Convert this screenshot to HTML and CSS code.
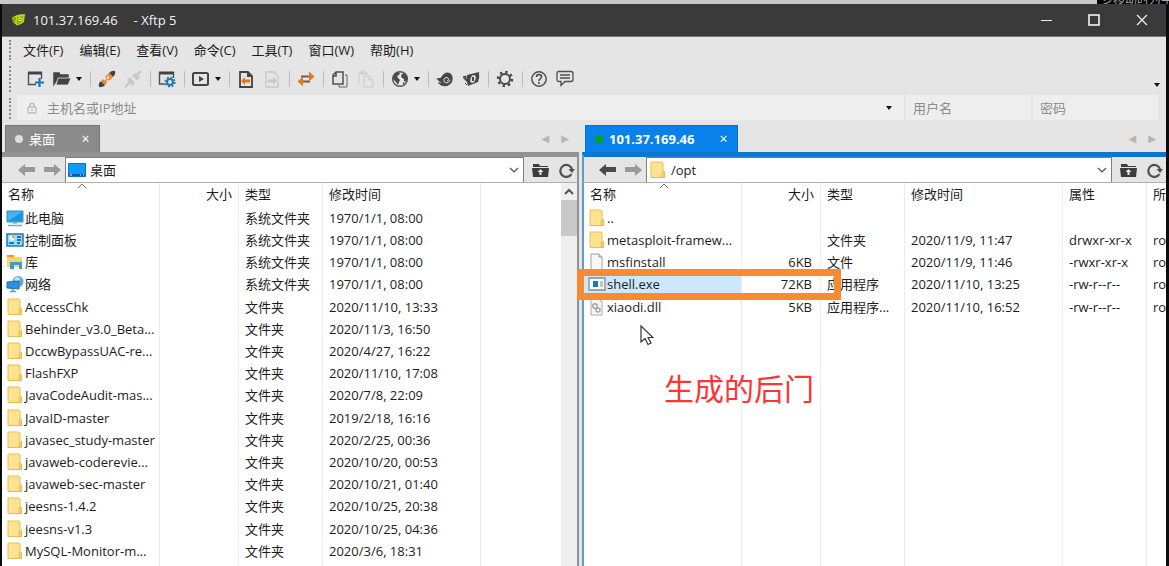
FILE: index.html
```html
<!DOCTYPE html>
<html lang="zh-CN">
<head>
<meta charset="utf-8">
<title>101.37.169.46 - Xftp 5</title>
<link rel="stylesheet" href="styles.css">
</head>
<body>
<svg class="defs" aria-hidden="true">
  <symbol id="folder" viewBox="0 0 16 18"><path d="M1 1h11v1h1v9h1.500v5.500H1z" fill="#ffe391" stroke="#e9bd52"/><path d="M12 16.500v-5l2.500-1v6z" fill="#f8cf68" stroke="#e5b74c" stroke-width=".7"/></symbol>
  <symbol id="back" viewBox="0 0 18 14"><path d="M0 7l7-6v3h10v5H7v4z" fill="currentColor"/></symbol>
  <symbol id="fwd" viewBox="0 0 18 14"><path d="M17 7l-7-6v3H0v5h10v4z" fill="currentColor"/></symbol>
  <symbol id="up" viewBox="0 0 18 14"><path d="M1 3V1h6l1 2h8v1H1z" fill="#3c3c3c"/><path d="M0 5h17l-1 9H1z" fill="#3c3c3c"/><path d="M8.500 6l3 3h-2v3h-2V9h-2z" fill="#e5e5e5"/></symbol>
  <symbol id="reload" viewBox="0 0 18 16"><path d="M13.500 12A6 6 0 1 1 14 7" fill="none" stroke="#505050" stroke-width="2.200"/><path d="M10.500 7H17l-3 4z" fill="#505050"/></symbol>
  <symbol id="chev" viewBox="0 0 10 6"><path d="M1 1l4 4 4-4" fill="none" stroke="#505050" stroke-width="1.200"/></symbol>
  <symbol id="drop" viewBox="0 0 6 4"><path d="M0 0h6L3 4z" fill="#111"/></symbol>
  <symbol id="doc" viewBox="0 0 16 18"><path d="M2 1h8l3 3v13H2z" fill="#f8f8f8" stroke="#8c8c8c" stroke-width=".8"/><path d="M10 1v3h3" fill="#ddd" stroke="#8c8c8c" stroke-width=".8"/></symbol>
</svg>
<div class="backdrop"><span>彡移动时为手</span></div>
<main class="window">
  <header class="titlebar">
    <svg width="14" height="14" viewBox="0 0 14 14"><path d="M0 4.500L3 3Q6 1 13 1l-1 8q-3 3-7 3.500L2 10 1 8z" fill="#b0d81c"/><path d="M0 5l4-1-1 7-2-2z" fill="#7fa80c"/><path d="M5 4.500l6-1.500-1 6-5 2z" fill="#7fa80c"/><circle cx="8" cy="6.500" r="2" fill="#e4ee3f"/><circle cx="8" cy="6.500" r=".8" fill="#56780c"/></svg>
    <h1>101.37.169.46</h1><span class="app">- Xftp 5</span>
    <div class="winbtns">
      <button aria-label="最小化"><svg width="12" height="12"><path d="M1 6.500h11" stroke="#eee"/></svg></button>
      <button aria-label="最大化"><svg width="12" height="12"><path d="M1 1h10v10H1z" fill="none" stroke="#fff" stroke-width="1.500"/></svg></button>
      <button aria-label="关闭"><svg width="12" height="12"><path d="M1 1l10 10M11 1L1 11" stroke="#eee" stroke-width="1.300"/></svg></button>
    </div>
  </header>
  <nav class="menu grip"><button>文件(F)</button><button>编辑(E)</button><button>查看(V)</button><button>命令(C)</button><button>工具(T)</button><button>窗口(W)</button><button>帮助(H)</button></nav>
  <div class="toolbar grip">
    <button aria-label="新建"><svg width="18" height="18" viewBox="0 0 18 18"><path d="M9 14.500H1.500V3h13v6" fill="none" stroke="#505050" stroke-width="1.400"/><path d="M1 3h14" stroke="#444" stroke-width="3"/><path d="M12.500 8v9M8 12.500h9" stroke="#1c78b4" stroke-width="2.200"/></svg></button>
    <button aria-label="打开" class="wide"><svg width="18" height="18" viewBox="0 0 18 18"><path d="M1 14V3h5l1 2h8v3H5z" fill="#444" stroke="#444" stroke-width="1.500"/><path d="M3 15L5 8h13l-3 7z" fill="#444" stroke="#e5e5e5" stroke-width=".8"/></svg><svg width="6" height="4"><use href="#drop"/></svg></button>
    <i></i>
    <button aria-label="连接"><svg width="18" height="18" viewBox="0 0 18 18"><path d="M1 17q-1-4 2-6l4 4q-1 2-6 2zM11 3q3-3 6-2 1 3-2 6z" fill="#444"/><path d="M4 10l4 4M10 4l4 4" stroke="#ed862b" stroke-width="2.600"/><path d="M7 12l2-3M8 8l1-3M10 10l3-2" stroke="#ed862b" stroke-width="1.600"/></svg></button>
    <button aria-label="断开" disabled><svg width="18" height="18" viewBox="0 0 18 18"><path d="M1 17l4-4M13 5l4-4" stroke="#c4c4c4" stroke-width="2"/><path d="M3 10l5 6 3-3-5-6zM8 5l5 6 3-4-4-4z" fill="#c9c9c9"/></svg></button>
    <i></i>
    <button aria-label="属性"><svg width="18" height="18" viewBox="0 0 18 18"><path d="M7 14H1.500V3h14v5" fill="none" stroke="#505050" stroke-width="1.400"/><path d="M1 3h15" stroke="#444" stroke-width="3"/><circle cx="12" cy="12" r="3" fill="none" stroke="#1c78b4" stroke-width="2"/><circle cx="12" cy="12" r="4.800" fill="none" stroke="#1c78b4" stroke-width="1.600" stroke-dasharray="1.900 1.870"/></svg></button>
    <i></i>
    <button aria-label="执行" class="wide"><svg width="18" height="18" viewBox="0 0 18 18"><rect x="1" y="3" width="15" height="12" rx="1.500" fill="none" stroke="#444" stroke-width="2"/><path d="M7 6l5 3-5 3z" fill="#444"/></svg><svg width="6" height="4"><use href="#drop"/></svg></button>
    <i></i>
    <button aria-label="向左传输"><svg width="18" height="18" viewBox="0 0 18 18"><path d="M3 2h8l4 4v11H3z" fill="none" stroke="#444" stroke-width="1.800"/><path d="M10 2v5h5" fill="#444"/><path d="M4 11l4-4v2.500h5v3H8V15z" fill="#df7624"/></svg></button>
    <button aria-label="向右传输" disabled><svg width="18" height="18" viewBox="0 0 18 18"><path d="M3 2h8l4 4v11H3z" fill="none" stroke="#c6c6c6" stroke-width="1.300"/><path d="M14 11l-4-4v2.500H5v3h5V15z" fill="#c6c6c6"/></svg></button>
    <i></i>
    <button aria-label="同步"><svg width="18" height="18" viewBox="0 0 18 18"><path d="M4 6.500h9M5 11.500h8" stroke="#606060" stroke-width="2"/><path d="M12 1.500l5.500 5-5.500 5zM6 6.500l-5.500 5 5.500 5z" fill="#e87a1c"/></svg></button>
    <i></i>
    <button aria-label="复制"><svg width="18" height="18" viewBox="0 0 18 18"><path d="M5 2h7v12H2V5zM5 2v4H2" fill="none" stroke="#505050" stroke-width="1.500"/><path d="M14 5h2v12H8v-2" fill="none" stroke="#666"/></svg></button>
    <button aria-label="粘贴" disabled><svg width="18" height="18" viewBox="0 0 18 18"><path d="M2 14V3h8v2M4 1h4v3H4zM7 6h5l4 4v7H7zM12 6v4h4" fill="none" stroke="#c9c9c9"/></svg></button>
    <i></i>
    <button aria-label="网络" class="wide"><svg width="18" height="18" viewBox="0 0 18 18"><circle cx="9" cy="9" r="7.300" fill="none" stroke="#555" stroke-width="1.500"/><path d="M2 6l4-4 3 1-1 2-2 1 1 2 2 2-1 2-1 3-2-3-3-3zM11 4l3-1 3 5-2 4-2-1v-2l-2-1-1-2zM12 12l2 1-2 2z" fill="#4a4a4a"/></svg><svg width="6" height="4"><use href="#drop"/></svg></button>
    <i></i>
    <button aria-label="Xshell"><svg width="18" height="18" viewBox="0 0 18 18"><path d="M0 8q5 1 6-2 3-5 8-3 4 3 2 9-3 5-9 4-4-1-5-4l4 1Q2 11 0 8z" fill="#484848"/><path d="M14 10q-1 3-4 3-3-1-2-4 2-3 4-1 2 2-1 3" fill="none" stroke="#ddd"/></svg></button>
    <button aria-label="Xftp"><svg width="18" height="18" viewBox="0 0 18 18"><path d="M5 5l12-3q1 5-1 10l-10 4-1-4-4-4 4 1z" fill="#484848"/><path d="M1 7l3-1v3zM5 15l-2-2" fill="#484848" stroke="#484848"/><ellipse cx="11" cy="9" rx="2.500" ry="4" fill="#ddd" transform="rotate(20 11 9)"/><path d="M11 7v4" stroke="#484848" stroke-width="2"/></svg></button>
    <i></i>
    <button aria-label="选项"><svg width="18" height="18" viewBox="0 0 18 18"><circle cx="9" cy="9" r="5" fill="none" stroke="#484848" stroke-width="2"/><circle cx="9" cy="9" r="7" fill="none" stroke="#484848" stroke-width="2.400" stroke-dasharray="2.400 3.098"/></svg></button>
    <i></i>
    <button aria-label="帮助"><svg width="18" height="18" viewBox="0 0 18 18"><circle cx="9" cy="9" r="7.200" fill="none" stroke="#505050" stroke-width="1.500"/><path d="M6.500 7q0-2.500 2.500-2.500T11.500 7Q11.500 8 9 10v1M9 12v2" fill="none" stroke="#444" stroke-width="1.500"/></svg></button>
    <button aria-label="反馈"><svg width="18" height="18" viewBox="0 0 18 18"><path d="M3 1.500h12q2 0 2 2v6q0 2-2 2H9l-4 4v-4H3q-2 0-2-2v-6q0-2 2-2zM4 5h10M4 8h10" fill="none" stroke="#505050" stroke-width="1.300"/></svg></button>
    <button class="more" aria-label="更多"><svg width="6" height="4"><use href="#drop"/></svg></button>
  </div>
  <form class="login grip">
    <label class="host"><svg width="10" height="12" viewBox="0 0 10 12"><path d="M1 5h8v6H1zM3 5V3q0-2 2-2t2 2v2M5 7v2" fill="none" stroke="#aaa"/></svg><input aria-label="主机" placeholder="主机名或IP地址"><svg width="6" height="4"><use href="#drop"/></svg></label>
    <input class="cred" aria-label="用户名" placeholder="用户名">
    <input class="cred" type="password" aria-label="密码" placeholder="密码">
  </form>
  <div class="panes">
    <section class="pane local">
      <div class="tabs"><div class="tab"><b class="dot"></b><span>桌面</span><button aria-label="关闭标签">×</button></div><div class="arrows"><span>◀</span><span>▶</span></div></div>
      <div class="path">
        <button class="off" aria-label="后退"><svg width="18" height="14"><use href="#back"/></svg></button><button class="off" aria-label="前进"><svg width="18" height="14"><use href="#fwd"/></svg></button>
        <label class="crumb"><svg width="18" height="14" viewBox="0 0 18 14"><path d="M.5.500h17v13H.5z" fill="#129aff" stroke="#0873c4"/><path d="M1 12h16" stroke="#075a9e" stroke-width="2"/><path d="M2 12h2M12 12h1M15 12h1" stroke="#fff"/></svg><input aria-label="本地路径" value="桌面"><svg width="10" height="6"><use href="#chev"/></svg></label>
        <button aria-label="上级目录"><svg width="18" height="14"><use href="#up"/></svg></button><button aria-label="刷新"><svg width="18" height="16"><use href="#reload"/></svg></button>
      </div>
      <div class="list">
        <table>
          <colgroup><col class="c-name"><col class="c-size"><col class="c-type"><col class="c-date"><col></colgroup>
          <thead><tr><th>名称<svg class="sort" width="10" height="6"><path d="M1 5l4-4 4 4" fill="none" stroke="#777"/></svg></th><th class="num">大小</th><th>类型</th><th>修改时间</th><th></th></tr></thead>
          <tbody>
            <tr><td><svg width="18" height="18" viewBox="0 0 18 18"><path d="M1 2h16v11H1z" fill="#42b4f4" stroke="#3388b8"/><path d="M2 12L16 3v9z" fill="#1b93e4"/><path d="M2 16.500h14M7 14h4" stroke="#8aa" stroke-width="1.500"/></svg>此电脑</td><td></td><td>系统文件夹</td><td>1970/1/1, 08:00</td><td></td></tr>
            <tr><td><svg width="18" height="18" viewBox="0 0 18 18"><path d="M1 3h16v12H1z" fill="#9bdcfa" stroke="#2574b0" stroke-width="1.500"/><circle cx="6" cy="7" r="2.500" fill="#fff"/><path d="M6 7V4.500A2.500 2.500 0 0 1 8.500 7z" fill="#e79b26"/><path d="M11 6h4M11 9h4M3 12h5M11 12h3" stroke="#1878b8" stroke-width="2"/></svg>控制面板</td><td></td><td>系统文件夹</td><td>1970/1/1, 08:00</td><td></td></tr>
            <tr><td><svg width="18" height="18" viewBox="0 0 18 18"><path d="M1 2h7l1 2h7v10H1z" fill="#fcd462"/><path d="M1 2h7v2H1z" fill="#e89b1c"/><path d="M4 16V9h12v7h-3v-4H8v4z" fill="#3f99d4"/></svg>库</td><td></td><td>系统文件夹</td><td>1970/1/1, 08:00</td><td></td></tr>
            <tr><td><svg width="18" height="18" viewBox="0 0 18 18"><circle cx="12" cy="6.500" r="5.500" fill="#62abd6"/><path d="M8 4q4-4 6 0l-2 5" fill="#bfe3f2"/><path d="M1 7l12-1v8L1 13z" fill="#2a93e0" stroke="#226fa7"/><path d="M4 16.500h6M7 14v2" stroke="#7899aa" stroke-width="1.500"/></svg>网络</td><td></td><td>系统文件夹</td><td>1970/1/1, 08:00</td><td></td></tr>
            <tr><td><svg width="18" height="18"><use href="#folder"/></svg>AccessChk</td><td></td><td>文件夹</td><td>2020/11/10, 13:33</td><td></td></tr>
            <tr><td><svg width="18" height="18"><use href="#folder"/></svg>Behinder_v3.0_Beta...</td><td></td><td>文件夹</td><td>2020/11/3, 16:50</td><td></td></tr>
            <tr><td><svg width="18" height="18"><use href="#folder"/></svg>DccwBypassUAC-re...</td><td></td><td>文件夹</td><td>2020/4/27, 16:22</td><td></td></tr>
            <tr><td><svg width="18" height="18"><use href="#folder"/></svg>FlashFXP</td><td></td><td>文件夹</td><td>2020/11/10, 17:08</td><td></td></tr>
            <tr><td><svg width="18" height="18"><use href="#folder"/></svg>JavaCodeAudit-mas...</td><td></td><td>文件夹</td><td>2020/7/8, 22:09</td><td></td></tr>
            <tr><td><svg width="18" height="18"><use href="#folder"/></svg>JavaID-master</td><td></td><td>文件夹</td><td>2019/2/18, 16:16</td><td></td></tr>
            <tr><td><svg width="18" height="18"><use href="#folder"/></svg>javasec_study-master</td><td></td><td>文件夹</td><td>2020/2/25, 00:36</td><td></td></tr>
            <tr><td><svg width="18" height="18"><use href="#folder"/></svg>javaweb-coderevie...</td><td></td><td>文件夹</td><td>2020/10/20, 00:53</td><td></td></tr>
            <tr><td><svg width="18" height="18"><use href="#folder"/></svg>javaweb-sec-master</td><td></td><td>文件夹</td><td>2020/10/21, 01:40</td><td></td></tr>
            <tr><td><svg width="18" height="18"><use href="#folder"/></svg>jeesns-1.4.2</td><td></td><td>文件夹</td><td>2020/10/25, 20:38</td><td></td></tr>
            <tr><td><svg width="18" height="18"><use href="#folder"/></svg>jeesns-v1.3</td><td></td><td>文件夹</td><td>2020/10/25, 04:36</td><td></td></tr>
            <tr><td><svg width="18" height="18"><use href="#folder"/></svg>MySQL-Monitor-m...</td><td></td><td>文件夹</td><td>2020/3/6, 18:31</td><td></td></tr>
            <tr class="fill"><td></td><td></td><td></td><td></td><td></td></tr>
          </tbody>
        </table>
        <div class="scroll"><svg width="10" height="7"><path d="M1 6l4-4 4 4" fill="none" stroke="#555" stroke-width="2"/></svg><span></span></div>
      </div>
    </section>
    <section class="pane remote">
      <div class="tabs"><div class="tab"><b class="dot"></b><span>101.37.169.46</span><button aria-label="关闭标签">×</button></div><div class="arrows"><span>◀</span><span>▶</span></div></div>
      <div class="path">
        <button aria-label="后退"><svg width="18" height="14"><use href="#back"/></svg></button><button class="off" aria-label="前进"><svg width="18" height="14"><use href="#fwd"/></svg></button>
        <label class="crumb"><svg width="18" height="18"><use href="#folder"/></svg><input aria-label="远程路径" value="/opt"><svg width="10" height="6"><use href="#chev"/></svg></label>
        <button aria-label="上级目录"><svg width="18" height="14"><use href="#up"/></svg></button><button aria-label="刷新"><svg width="18" height="16"><use href="#reload"/></svg></button>
      </div>
      <div class="list">
        <table>
          <colgroup><col class="c-name"><col class="c-size"><col class="c-type"><col class="c-date"><col class="c-attr"><col></colgroup>
          <thead><tr><th>名称<svg class="sort" width="10" height="6"><path d="M1 5l4-4 4 4" fill="none" stroke="#777"/></svg></th><th class="num">大小</th><th>类型</th><th>修改时间</th><th>属性</th><th>所有者</th></tr></thead>
          <tbody>
            <tr><td><svg width="18" height="18"><use href="#folder"/></svg>..</td><td></td><td></td><td></td><td></td><td></td></tr>
            <tr><td><svg width="18" height="18"><use href="#folder"/></svg>metasploit-framew...</td><td></td><td>文件夹</td><td>2020/11/9, 11:47</td><td>drwxr-xr-x</td><td>root</td></tr>
            <tr><td><svg width="18" height="18"><use href="#doc"/></svg>msfinstall</td><td class="num">6KB</td><td>文件</td><td>2020/11/9, 11:46</td><td>-rwxr-xr-x</td><td>root</td></tr>
            <tr><td class="picked"><svg width="18" height="18" viewBox="0 0 18 18"><path d="M1 3h16v12H1z" fill="#f7f7f7" stroke="#8b8b8b" stroke-width="1.300"/><path d="M5 6h5v6H5z" fill="#2373bd"/><path d="M12 7h3M12 9h3M12 11h3" stroke="#999"/></svg>shell.exe</td><td class="num">72KB</td><td>应用程序</td><td>2020/11/10, 13:25</td><td>-rw-r--r--</td><td>root</td></tr>
            <tr><td><svg width="18" height="18" viewBox="0 0 18 18"><path d="M3 1h8l3 3v13H3z" fill="#f5f5f5" stroke="#9a9a9a" stroke-width=".8"/><circle cx="7" cy="8" r="2.300" fill="none" stroke="#a2a8ae" stroke-width="1.500"/><circle cx="10" cy="12" r="2" fill="none" stroke="#a2a8ae" stroke-width="1.500"/></svg>xiaodi.dll</td><td class="num">5KB</td><td>应用程序...</td><td>2020/11/10, 16:52</td><td>-rw-r--r--</td><td>root</td></tr>
            <tr class="fill"><td></td><td></td><td></td><td></td><td></td><td></td></tr>
          </tbody>
        </table>
        <div class="frame"></div>
        <svg class="cursor" width="14" height="21" viewBox="0 0 14 21"><path d="M1 1v16l4-3.500 3 6 3-1.500-3-5.500h5z" fill="#fff" stroke="#333" stroke-width="1.200"/></svg>
        <p class="note">生成的后门</p>
      </div>
    </section>
  </div>
</main>
</body>
</html>
```
FILE: styles.css
```css
* { box-sizing: border-box; }
body {
  margin: 0; height: 100vh; overflow: hidden; background: #0b0b0b; color: #1c1c1c;
  display: flex; flex-direction: column;
  font: 13px/22px "Open Sans", "Noto Sans CJK SC", sans-serif;
}
button, input { font: inherit; color: inherit; border: 0; padding: 0; margin: 0; background: none; outline: 0; min-width: 0; }
svg { display: block; flex: none; }
.defs { position: absolute; width: 0; height: 0; }
.backdrop { height: 4px; flex: none; background: #c9c9c9; display: flex; justify-content: flex-end; overflow: hidden; }
.backdrop span { background: #000; color: #aaa; width: 72px; padding-left: 4px; line-height: 0; height: 4px; font-size: 12px; white-space: nowrap; overflow: hidden; }
.window { flex: 1; min-height: 0; margin: 0 3px 0 2px; background: #e5e5e5; display: flex; flex-direction: column; }
.titlebar { height: 33px; flex: none; background: #3a3a3a; border-bottom: 1px solid #777; color: #f2f2f2; display: flex; align-items: center; padding-left: 10px; }
.titlebar h1 { margin: 0 16px 0 7px; font-size: 13px; font-weight: 400; }
.winbtns { margin-left: auto; display: flex; }
.winbtns button { width: 48px; height: 32px; display: grid; place-items: center; }
.grip { position: relative; display: flex; align-items: center; flex: none; }
.grip::before { content: ""; position: absolute; left: 7px; top: 3px; bottom: 3px; border-left: 2px dotted #8b8b8b; }
.menu { height: 26px; padding-left: 21px; gap: 16px; }
.toolbar { height: 32px; padding-left: 25px; gap: 8px; }
.toolbar button { display: flex; align-items: center; gap: 5px; }
.toolbar i { width: 1px; height: 16px; margin-right: -1px; background: #bcbcbc; }
.toolbar .more { margin: 12px 6px 0 auto; }
.login { height: 27px; padding: 0 8px 2px 15px; gap: 2px; }
.login .host { flex: 1; height: 25px; background: #eee; display: flex; align-items: center; padding: 0 12px 0 10px; gap: 10px; }
.host input { flex: 1; }
.login .cred { width: 125px; height: 25px; padding-left: 7px; background: #eee; }
.login ::placeholder { color: #8c8c8c; opacity: 1; }
.panes { flex: 1; min-height: 0; display: grid; grid-template-columns: minmax(0, 577fr) minmax(0, 584fr); column-gap: 3px; }
.pane { min-height: 0; display: flex; flex-direction: column; }
.tabs { height: 30px; flex: none; padding: 3px 10px 0 3px; display: flex; align-items: center; }
.tab { height: 27px; display: flex; align-items: center; color: #fff; background: #8b8b8b; border: 1px solid #777; border-bottom: 0; padding: 0 9px; }
.dot { width: 8px; height: 8px; border-radius: 50%; background: #ddd; margin-right: 6px; }
.tab button { margin-left: auto; width: 9px; font-size: 14px; }
.arrows { margin-left: auto; display: flex; gap: 12px; color: #b5b5b5; font: 10px/22px "DejaVu Sans", sans-serif; }
.local .tab { width: 95px; }
.remote .tab { width: 153px; background: #0881ea; border-color: #0873cb; font-weight: 700; }
.remote .tab button { font-weight: 400; }
.remote .dot { background: #07a21c; }
.path { height: 31px; flex: none; border-top: 5px solid #929292; border-bottom: 1px solid #b0b0b0; display: flex; align-items: center; padding: 0 1px 0 16px; gap: 8px; }
.path button { color: #4a4a4a; }
.path .off { color: #999; }
.remote .path { border-top-color: #0a78d1; padding: 0 2px 0 15px; }
.crumb { flex: 1; min-width: 0; height: 25px; margin-left: -5px; background: #fff; border: 1px solid #808080; border-bottom: 0; display: flex; align-items: center; padding: 0 4px 0 2px; gap: 4px; }
.crumb input { flex: 1; }
.local .path, .local .list { border-right: 2px solid #929292; }
.remote .path, .remote .list { border-left: 2px solid #5d9cd0; }
.list { position: relative; flex: 1; min-height: 0; background: #fff; display: flex; align-items: stretch; }
table { flex: 1; width: 100%; min-width: 0; height: 100%; table-layout: fixed; border-collapse: separate; border-spacing: 0; }
.c-name { width: 158px; }
.c-size { width: 79px; }
.c-type { width: 84px; }
.c-date { width: 158px; }
.c-attr { width: 84px; }
th { height: 24px; font-weight: 400; text-align: left; vertical-align: top; position: relative; }
th, td { padding: 0 6px; white-space: nowrap; overflow: hidden; border-right: 1px solid #e8eef3; }
th:last-child, td:last-child { border-right: 0; }
td { height: 22px; }
tr:nth-child(5n) td { height: 23px; }
.fill td { height: auto; }
.num { text-align: right; }
td.num { padding-right: 8px; }
td:first-child { padding-left: 4px; }
td svg { float: left; margin: 2px 1px 0 0; }
.picked { background: #cce8ff; }
.sort { position: absolute; left: 75px; top: 0; }
.scroll { flex: none; width: 16px; background: #efefef; display: flex; flex-direction: column; align-items: center; gap: 5px; padding-top: 5px; }
.scroll span { width: 16px; height: 36px; background: #c9c9c9; }
.frame { position: absolute; left: -7px; top: 86px; width: 264px; height: 31px; border: 7px solid #f68b36; }
.cursor { position: absolute; left: 56px; top: 142px; }
.note { position: absolute; left: 80px; top: 184px; margin: 0; color: #ff3434; font: 400 30px/40px "Noto Sans CJK SC", sans-serif; }
```
